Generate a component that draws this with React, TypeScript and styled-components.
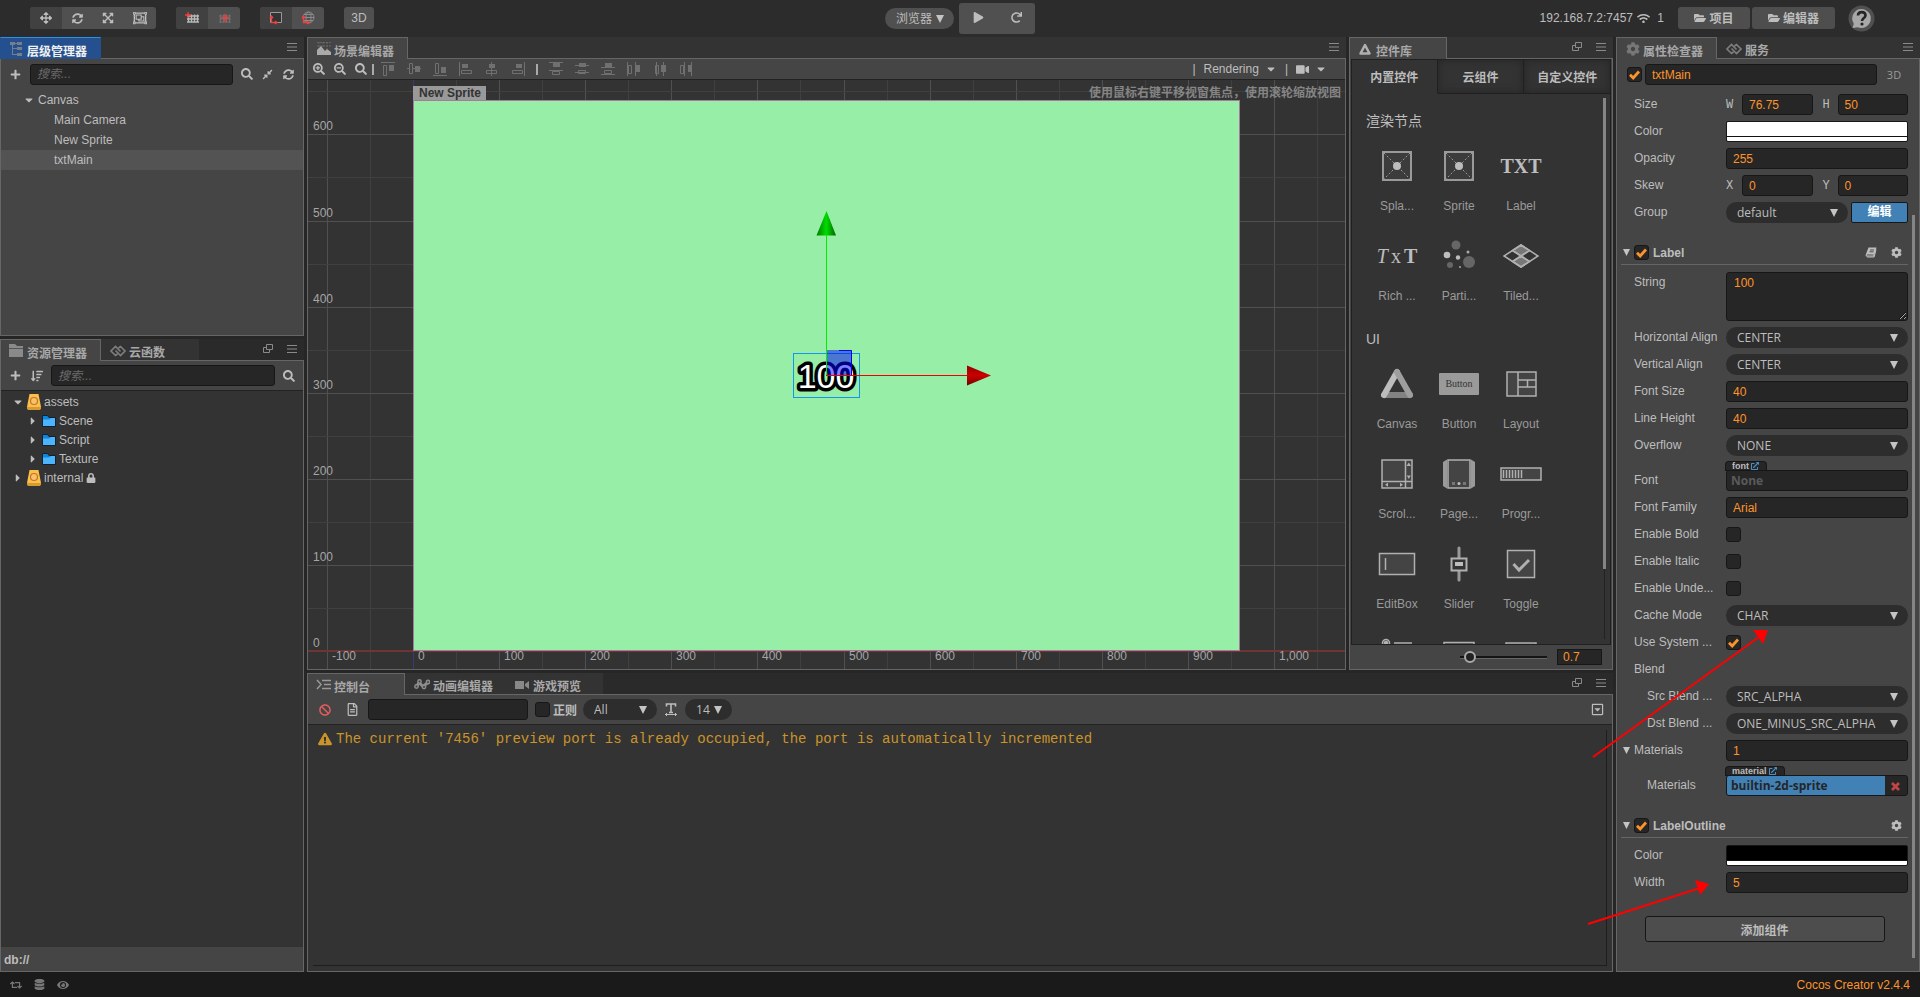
import type { ReactNode } from 'react';
import styled, { createGlobalStyle, css } from 'styled-components';
import {
  FaArrowsAlt,
  FaBan,
  FaCaretDown,
  FaCaretRight,
  FaCog,
  FaCompressAlt,
  FaDatabase,
  FaExclamationTriangle,
  FaExpandArrowsAlt,
  FaExternalLinkAlt,
  FaEye,
  FaFolderOpen,
  FaLock,
  FaPlay,
  FaPlus,
  FaRedo,
  FaRegCaretSquareDown,
  FaRegFileAlt,
  FaRegObjectGroup,
  FaRetweet,
  FaSearch,
  FaSearchMinus,
  FaSearchPlus,
  FaSortAmountDown,
  FaSyncAlt,
  FaVideo,
  FaWifi,
} from 'react-icons/fa';

const sans = '"Liberation Sans", "Noto Sans CJK SC", sans-serif';
const ui = '"Open Sans", "Noto Sans CJK SC", sans-serif';

const GlobalStyle = createGlobalStyle`
  * {
    box-sizing: border-box;
  }
  body {
    margin: 0;
    background: #262626;
    color: #bdbdbd;
    font: 12px ${sans};
    overflow: hidden;
  }
  button, input, select, textarea {
    margin: 0;
    font: inherit;
    color: inherit;
  }
`;

/* ---------- shell ---------- */

const App = styled.div`
  height: 100vh;
  display: flex;
  flex-direction: column;
`;

const TopBar = styled.header`
  height: 37px;
  display: grid;
  grid-template-columns: 1fr auto 1fr;
  background: #2c2c2c;
`;

const TopGroup = styled.div<{ $end?: boolean }>`
  display: flex;
  align-items: center;
  height: 36px;
  ${p => (p.$end ? 'justify-content: flex-end; padding-right: 45px;' : 'padding-left: 30px; gap: 20px;')}
`;

const ButtonGroup = styled.div`
  display: flex;
  height: 22px;
  border-radius: 3px;
  overflow: hidden;
  background: #505050;
`;

const ToolButton = styled.button<{ $active?: boolean; $wide?: number }>`
  display: flex;
  align-items: center;
  justify-content: center;
  width: ${p => p.$wide ?? 32}px;
  padding: 0;
  border: 0;
  background: ${p => (p.$active ? '#414141' : 'transparent')};
`;

const PreviewBar = styled.div`
  display: flex;
  gap: 5px;
  height: 37px;
`;

const PlayGroup = styled.div`
  display: flex;
  height: 31px;
  margin-top: 3px;
  padding-bottom: 3px;
  border-radius: 3px;
  background: #505050;
`;

const TopLink = styled.button<{ $wide: number }>`
  display: flex;
  align-items: center;
  justify-content: center;
  gap: 3px;
  width: ${p => p.$wide}px;
  height: 22px;
  margin-left: 2px;
  padding: 0 0 1px;
  border: 0;
  border-radius: 3px;
  background: #4e4e4e;
  font-weight: 700;
`;

const Address = styled.span`
  display: flex;
  align-items: center;
  gap: 4px;
  margin-right: 12px;
`;

const HelpButton = styled.button`
  display: flex;
  margin-left: 13px;
  padding: 0;
  border: 0;
  background: none;
`;

const Workspace = styled.main`
  flex: 1;
  min-height: 0;
  display: grid;
  grid-template-columns: 304px minmax(0, 1fr) 304px;
  gap: 3px;
`;

const Column = styled.div<{ $rows: string }>`
  display: grid;
  grid-template-rows: ${p => p.$rows};
  gap: 3px;
  min-width: 0;
  min-height: 0;
`;

const SceneRow = styled.div`
  display: grid;
  grid-template-columns: minmax(0, 1fr) 264px;
  gap: 3px;
  min-height: 0;
`;

const StatusBar = styled.footer`
  display: flex;
  align-items: center;
  gap: 12px;
  height: 25px;
  padding: 0 10px;
  background: #1a1a1a;
  color: #777;
`;

const Version = styled.span`
  margin-left: auto;
  color: #fd942b;
`;

/* ---------- panels ---------- */

const Panel = styled.section`
  position: relative;
  display: flex;
  flex-direction: column;
  min-width: 0;
  min-height: 0;
`;

const TabStrip = styled.div<{ $dark?: boolean }>`
  display: flex;
  height: 21px;
  background: ${p => (p.$dark ? '#2a2a2a' : '#333')};
`;

const Tab = styled.button<{ $active?: boolean; $focused?: boolean }>`
  position: relative;
  display: flex;
  align-items: center;
  gap: ${p => (p.$active ? 2 : 3)}px;
  height: ${p => (p.$active ? 22 : 21)}px;
  min-width: 98px;
  padding: 4px 12px 0 9px;
  border: 0;
  background: #333;
  color: #a8a8a8;
  font-weight: 700;
  ${p =>
    p.$active &&
    css`
      padding: 3px 13px 0 8px;
      border: 1px solid #666;
      border-bottom: 0;
      background: #454545;
    `}
  ${p =>
    p.$focused &&
    css`
      border-color: #2a90e8 #25508f;
      background: #25508f;
      color: #f0f0f0;
    `}
  svg {
    width: 16px;
    height: 14px;
    margin-bottom: 2px;
    flex: none;
  }
`;

const TabTools = styled.div`
  display: flex;
  align-items: center;
  gap: 14px;
  margin-left: auto;
  padding-right: 7px;
  padding-bottom: 2px;
`;

const IconButton = styled.button<{ $w?: number; $color?: string }>`
  display: flex;
  align-items: center;
  justify-content: center;
  flex: none;
  width: ${p => p.$w ?? 21}px;
  height: 20px;
  padding: 0;
  border: 0;
  background: none;
  color: ${p => p.$color ?? '#bdbdbd'};
`;

const TinyButton = styled(IconButton)`
  width: 10px;
  height: 12px;
  color: #8a8a8a;
`;

const PanelBody = styled.div<{ $dark?: boolean }>`
  flex: 1;
  min-height: 0;
  display: flex;
  flex-direction: column;
  border: 1px solid #666;
  background: ${p => (p.$dark ? '#333' : '#454545')};
`;

const SearchBar = styled.div<{ $line?: boolean }>`
  display: flex;
  align-items: center;
  height: 30px;
  padding: 0 4px;
  background: #454545;
  ${p => p.$line && 'border-bottom: 1px solid #222;'}
`;

const fieldBox = css`
  min-width: 0;
  height: 21px;
  border: 1px solid #171717;
  border-radius: 3px;
  background: #262626;
`;

const TextField = styled.input`
  ${fieldBox}
  width: 100%;
  padding: 0 6px;
  color: #fd942b;
  outline: 0;
`;

const SearchField = styled(TextField)`
  flex: 1;
  margin: 0 3px 0 4px;
  color: #bdbdbd;
  &::placeholder {
    color: #6a6a6a;
    font-style: italic;
  }
`;

const CheckWrap = styled.span`
  display: inline-grid;
  place-items: center;
  width: 15px;
  height: 15px;
  flex: none;
  > * {
    grid-area: 1 / 1;
  }
  svg {
    pointer-events: none;
    z-index: 1;
  }
`;

const CheckInput = styled.input`
  appearance: none;
  width: 15px;
  height: 15px;
  border: 1px solid #171717;
  border-radius: 3px;
  background: #262626;
`;

const SelectWrap = styled.div<{ $w?: number; $raised?: boolean }>`
  display: grid;
  align-items: center;
  height: 21px;
  width: ${p => (p.$w ? `${p.$w}px` : '100%')};
  margin-top: ${p => (p.$raised ? 8 : 0)}px;
  border-radius: 11px;
  background: ${p => (p.$raised ? '#505050' : '#2d2d2d')};
  > svg {
    grid-area: 1 / 1;
    justify-self: end;
    margin-right: 10px;
    pointer-events: none;
  }
`;

const Select = styled.select`
  grid-area: 1 / 1;
  appearance: none;
  width: 100%;
  height: 21px;
  padding: 0 0 0 11px;
  border: 0;
  background: none;
  font-family: ${ui};
  outline: 0;
`;

/* ---------- trees ---------- */

const Tree = styled.ul<{ $row: number }>`
  flex: 1;
  margin: 0;
  padding: 1px 0 0;
  list-style: none;
  li {
    height: ${p => p.$row}px;
  }
`;

const TreeRow = styled.li<{ $indent: number; $selected?: boolean }>`
  display: flex;
  align-items: center;
  gap: 3px;
  padding-left: ${p => p.$indent}px;
  background: ${p => (p.$selected ? '#535353' : 'transparent')};
  svg {
    flex: none;
  }
`;

const DbPath = styled.div`
  height: 24px;
  padding: 6px 3px;
  background: #454545;
  font-weight: 700;
`;

/* ---------- scene ---------- */

const SceneTools = styled.div`
  display: flex;
  align-items: center;
  height: 21px;
  border-bottom: 1px solid #222;
`;

const Divider = styled.span<{ $m: number }>`
  width: 2px;
  height: 11px;
  margin: 0 ${p => p.$m}px;
  background: #aaa;
`;

const RenderMode = styled.div`
  display: flex;
  align-items: center;
  gap: 6px;
  margin-left: auto;
  padding-right: 16px;
`;

const DropButton = styled.button`
  display: flex;
  align-items: center;
  gap: 6px;
  padding: 0 2px;
  border: 0;
  background: none;
`;

const SceneCanvas = styled.div`
  position: relative;
  flex: 1;
  min-height: 0;
  overflow: hidden;
  background: #333;
  > svg {
    display: block;
    width: 100%;
    height: 100%;
  }
  text {
    font: 12px ${sans};
    fill: #a6a6a6;
  }
`;

const SceneHint = styled.div`
  position: absolute;
  top: 4px;
  right: 4px;
  color: #858585;
  font-weight: 700;
  line-height: 18px;
`;

const NodeTag = styled.div`
  position: absolute;
  left: 105px;
  top: 6px;
  height: 14px;
  padding: 0 5px 0 6px;
  background: #999;
  color: #333;
  font-weight: 700;
  line-height: 14px;
`;

/* ---------- console ---------- */

const ConsoleTools = styled.div`
  display: flex;
  align-items: center;
  height: 30px;
  padding: 0 4px;
  border-bottom: 1px solid #222;
  background: #454545;
`;

const ConsoleFilter = styled(TextField)`
  width: 160px;
  margin-right: 7px;
  color: #bdbdbd;
`;

const RegexLabel = styled.label`
  margin: 0 6px 0 3px;
  font-weight: 700;
`;

const CollapseButton = styled(IconButton)`
  margin-left: auto;
`;

const LogArea = styled.div`
  flex: 1;
  margin: 5px;
  border: solid #1e1e1e;
  border-width: 0 1px 1px 0;
`;

const LogLine = styled.div`
  display: flex;
  align-items: center;
  gap: 4px;
  height: 18px;
  padding-left: 5px;
  color: #ca942b;
  font: 14px "Liberation Mono", monospace;
`;

/* ---------- node library ---------- */

const LibraryTabs = styled.div`
  display: grid;
  grid-template-columns: 1fr 1fr 1fr;
  margin: 0 1px;
`;

const LibraryTab = styled.button<{ $active?: boolean }>`
  height: 35px;
  padding: 0;
  border: 1px solid #202020;
  border-left-width: ${p => (p.$active ? 1 : 0)}px;
  background: #333;
  font-weight: 700;
  ${p =>
    p.$active
      ? 'border-bottom-color: #333;'
      : 'box-shadow: inset 0 0 8px #262626;'}
`;

const LibraryBody = styled.div`
  flex: 1;
  min-height: 0;
  display: flex;
  overflow: hidden;
  margin: 0 1px;
  border: solid #202020;
  border-width: 0 1px 1px;
  background: #333;
`;

const LibraryContent = styled.div`
  flex: 1;
  padding: 16px 0 0 14px;
`;

const GroupTitle = styled.h3`
  margin: 0 0 10px;
  font-size: 14px;
  font-weight: 400;
  line-height: 22px;
`;

const NodeGrid = styled.div`
  display: flex;
  flex-wrap: wrap;
  margin-bottom: 6px;
`;

const NodeItem = styled.div`
  display: flex;
  flex-direction: column;
  align-items: center;
  gap: 9px;
  width: 62px;
  height: 90px;
  color: #9a9a9a;
  line-height: 14px;
  svg {
    width: 48px;
    height: 48px;
  }
`;

const SerifGlyph = styled.div`
  height: 48px;
  color: #bdbdbd;
  font: 700 20px/49px "Liberation Serif", serif;
  small {
    padding: 0 3px;
    font-weight: 400;
    font-size: 20px;
  }
  i {
    font-weight: 400;
  }
`;

const ButtonGlyph = styled.div`
  width: 40px;
  height: 22px;
  margin: 13px 0;
  border-radius: 1px;
  background: #9a9a9a;
  color: #333;
  font: 10px/22px "Liberation Serif", serif;
  text-align: center;
`;

const ScrollTrack = styled.div`
  width: 3px;
  margin: 4px 4px 5px 0;
  background: linear-gradient(#222, #222) center / 1px 100% no-repeat;
`;

const ScrollThumb = styled.div`
  height: 87%;
  background: #858585;
`;

const LibraryFooter = styled.div`
  display: flex;
  align-items: center;
  justify-content: flex-end;
  gap: 10px;
  height: 24px;
  padding-right: 10px;
`;

const ZoomSlider = styled.input`
  appearance: none;
  width: 87px;
  height: 12px;
  margin: 0;
  background: linear-gradient(#141414 66%, #666 66%) center / 100% 3px no-repeat;
  &::-webkit-slider-thumb {
    appearance: none;
    width: 12px;
    height: 12px;
    border: 2px solid #aaa;
    border-radius: 50%;
    background: #222;
  }
`;

const ZoomValue = styled(TextField)`
  width: 45px;
  height: 16px;
  padding: 0 5px;
  border-radius: 0;
`;

/* ---------- inspector ---------- */

const NameRow = styled.div`
  display: flex;
  align-items: center;
  gap: 3px;
  padding: 5px 11px 3px 10px;
`;

const ModeButton = styled.button`
  width: 28px;
  flex: none;
  padding: 0;
  border: 0;
  background: none;
  color: #9a9a9a;
  font: 11px ${ui};
`;

const InspectorScroll = styled.div`
  flex: 1;
  min-height: 0;
  display: flex;
  overflow: hidden;
`;

const Properties = styled.div`
  flex: 1;
  min-width: 0;
  padding: 6px 4px 0 4px;
`;

const InspectorTrack = styled.div`
  width: 7px;
  padding: 127px 4px 13px 0;
  background: #858585 content-box;
`;

const PropRow = styled.div<{ $sub?: boolean }>`
  display: grid;
  grid-template-columns: 92px minmax(0, 1fr);
  align-items: end;
  min-height: 21px;
  margin-bottom: 6px;
  padding-left: 13px;
  > :first-child {
    padding-left: ${p => (p.$sub ? 13 : 0)}px;
  }
`;

const PropLabel = styled.label<{ $top?: boolean }>`
  align-self: ${p => (p.$top ? 'start' : 'end')};
  height: 21px;
  line-height: 20px;
  white-space: nowrap;
`;

const PropFold = styled(PropLabel)`
  display: flex;
  gap: 4px;
  margin-left: -11px;
  svg {
    margin-top: 7px;
  }
`;

const CheckCell = styled.div`
  height: 21px;
  padding-top: 3px;
`;

const Pair = styled.div`
  display: grid;
  grid-template-columns: 16px 1fr 25px 1fr;
  align-items: center;
  label {
    font: 12px "Liberation Mono", monospace;
  }
  label:nth-of-type(2) {
    padding-left: 10px;
  }
`;

const ColorButton = styled.button<{ $color: string }>`
  width: 100%;
  height: 21px;
  padding: 0;
  border: 1px solid #171717;
  border-radius: 2px;
  background: linear-gradient(${p => p.$color} 14px, #111 14px, #111 15px, #fff 15px);
`;

const GroupCell = styled.div`
  display: grid;
  grid-template-columns: minmax(0, 1fr) 57px;
  gap: 3px;
`;

const EditButton = styled.button`
  height: 21px;
  padding: 0;
  border: 1px solid #171717;
  border-radius: 2px;
  background: #4281b6;
  color: #fff;
  font-weight: 700;
  line-height: 17px;
`;

const SectionHead = styled.div`
  display: flex;
  align-items: center;
  gap: 4px;
  height: 24px;
  margin: 18px 0 7px;
  padding: 0 1px 0 2px;
  border-bottom: 1px solid #666;
  font-weight: 700;
`;

const SectionTools = styled.div`
  display: flex;
  gap: 5px;
  margin-left: auto;
`;

const TextArea = styled.textarea`
  ${fieldBox}
  display: block;
  width: 100%;
  height: 49px;
  padding: 3px 7px;
  color: #fd942b;
  resize: vertical;
  outline: 0;
`;

const AssetRef = styled.div`
  display: flex;
  flex-direction: column;
`;

const AssetType = styled.span`
  display: flex;
  align-items: center;
  align-self: flex-start;
  gap: 2px;
  height: 8px;
  padding: 0 7px 0 6px;
  border-radius: 3px 3px 0 0;
  background: #262626;
  box-shadow: 0 0 0 1px #171717;
  font-size: 9px;
  font-weight: 700;
  line-height: 8px;
  svg {
    color: #4a90c8;
  }
`;

const AssetBox = styled.div<{ $filled?: boolean }>`
  ${fieldBox}
  display: grid;
  grid-template-columns: minmax(0, 1fr) ${p => (p.$filled ? 22 : 0)}px;
  overflow: hidden;
`;

const AssetName = styled.button<{ $filled?: boolean }>`
  padding: 0 4px;
  border: 0;
  background: ${p => (p.$filled ? '#4281b6' : 'none')};
  color: ${p => (p.$filled ? '#262626' : '#5a5a5a')};
  font: 700 12px ${ui};
  line-height: 18px;
  text-align: left;
`;

const AddButton = styled.button`
  display: block;
  width: 240px;
  height: 26px;
  margin: 23px auto 0;
  border: 1px solid #171717;
  border-radius: 3px;
  background: #4d4d4d;
  font-weight: 700;
`;

const Pointers = styled.svg`
  position: absolute;
  left: -36px;
  top: 0;
  width: 200px;
  height: 920px;
  pointer-events: none;
`;

/* ---------- small drawings ---------- */

const MenuIcon = () => (
  <svg width="10" height="8" viewBox="0 0 10 8" stroke="currentColor">
    <path d="M0 .5h10M0 4h10M0 7.5h10" />
  </svg>
);

const PopIcon = () => (
  <svg width="10" height="10" viewBox="0 0 10 10" fill="none" stroke="currentColor">
    <path d="M3.5.5h6v5h-6zM3 3.5H.5v5h6V6" />
  </svg>
);

const Triangle = ({ small }: { small?: boolean }) => (
  <svg width={small ? 7 : 8} height={small ? 7 : 8} viewBox="0 0 8 8" fill="#c4c4c4">
    <path d="M0 0h8L4 8z" />
  </svg>
);

const CheckMark = () => (
  <svg width="11" height="10" viewBox="0 0 11 10" fill="none" stroke="#fd942b" strokeWidth="2.800">
    <path d="M1 4.800 4.200 8 10 1.500" />
  </svg>
);

const CrossMark = () => (
  <svg width="9" height="9" viewBox="0 0 9 9" stroke="currentColor" strokeWidth="2.800">
    <path d="M1 1l7 7M8 1 1 8" />
  </svg>
);

const BookIcon = () => (
  <svg width="12" height="11" viewBox="0 0 12 11">
    <path d="M3.500.5h8L9 9.500H1.500C.5 9.500.5 8.500.8 7.500z" fill="#bdbdbd" />
    <path d="M5 3h4M4.500 4.800h4M1.800 8h6.500" stroke="#454545" strokeWidth=".9" />
    <path d="M11 2.500 9.200 10H2" fill="none" stroke="#bdbdbd" />
  </svg>
);

const TreeIcon = () => (
  <svg viewBox="0 0 16 14" fill="#8a8a8a">
    <path d="M1 0h5v3H1zM3 3h1v10H3zM8 0h5v3H8zM8 5h5v3H8zM8 11h5v3H8zM6 1h2v1H6zM4 6h4v1H4zM4 12h4v1H4z" opacity=".8" />
  </svg>
);

const FolderIcon = () => (
  <svg viewBox="0 0 16 14" fill="#8a8a8a">
    <path d="M0 0h6l2 2h6v2H0zM0 5h14v8H0z" />
    <path d="M0 4.500h14" stroke="#555" />
  </svg>
);

const CloudIcon = () => (
  <svg viewBox="0 0 16 14" fill="none" stroke="#7c7c7c" strokeWidth="1.700">
    <path d="M7.500 10 5.500 11.500 1 7l4.500-4.500L10.500 7.500M8.500 4l2-1.500L15 7l-4.500 4.500L5.500 6.500" />
  </svg>
);

const SceneIcon = () => (
  <svg viewBox="0 0 16 14">
    <path d="M1 .5h14M1 4h14M3 0v7M7 0v5M11 0v7" stroke="#666" strokeDasharray="2 1" />
    <path d="M1 13V8l4-4 4 5 2-2 4 3v3z" fill="#aaa" />
  </svg>
);

const ConsoleIcon = () => (
  <svg viewBox="0 0 16 14" fill="none" stroke="#999" strokeWidth="1.500">
    <path d="M1 2l4 4.500L1 11M6 2.500h9M8 6.500h7M6 10.500h9" />
  </svg>
);

const AnimIcon = () => (
  <svg viewBox="0 0 16 14" fill="#444" stroke="#8c8c8c" strokeWidth="1.400">
    <path d="M2.500 8.500 5 4.500l4 4 5-4" fill="none" strokeWidth="3" />
    <circle cx="2.500" cy="8.500" r="1.700" />
    <circle cx="5.500" cy="3.500" r="1.700" />
    <circle cx="10" cy="9" r="1.700" />
    <circle cx="14" cy="4" r="1.700" />
  </svg>
);

const CameraIcon = () => (
  <svg viewBox="0 0 16 14" fill="#888">
    <path d="M1 3h9v8H1zM11 6l4-3v8l-4-3z" />
  </svg>
);

const PrismIcon = () => (
  <svg viewBox="0 0 16 14" fill="none" stroke="#b0b0b0" strokeWidth="2.500" strokeLinejoin="round">
    <path d="M7 3l4.500 8.500h-9z" />
  </svg>
);

const SnapIcon = ({ cross }: { cross?: boolean }) => (
  <svg width="14" height="12" viewBox="0 0 14 12" fill="none">
    <path
      d="M2 4h12M2 7h12M2 10h12M3.500 2.500v8M6.500 2.500v8M9.500 2.500v8M12.500 2.500v8"
      stroke={cross ? '#707070' : '#b8b8b8'}
      strokeWidth={cross ? 1 : 1.4}
    />
    <path d={cross ? 'M4 6h8M8 2v8' : 'M0 3h6M3 0v6'} stroke="#f04040" strokeWidth="1.300" />
  </svg>
);

const PivotIcon = ({ globe }: { globe?: boolean }) => (
  <svg width="14" height="14" viewBox="0 0 14 14" fill="none">
    {globe ? (
      <g stroke="#8c8c8c">
        <circle cx="7.500" cy="6.500" r="5.500" />
        <ellipse cx="7.500" cy="6.500" rx="2.500" ry="5.500" />
        <path d="M2 6.500h11M3 3.500h9M3 9.500h9" />
      </g>
    ) : (
      <path d="M1.500 1.500h11v10h-11z" stroke="#999" fill="#333" />
    )}
    <path d="M2.500 6v5.500H7M1 7 2.500 5 4 7M6 10l2 1.500L6 13" stroke="#f04040" strokeWidth="1.300" />
  </svg>
);

const HelpIcon = () => (
  <svg width="27" height="27" viewBox="0 0 27 27">
    <circle cx="13.500" cy="13.500" r="13" fill="#505050" />
    <path d="M13.500 4a9.500 9.500 0 1 1-4 18.200L4.500 23l1.300-4.300A9.500 9.500 0 0 1 13.500 4z" fill="#a8a8a8" />
    <path d="M10 10.500c0-4.500 7.500-4.500 7.500 0 0 2.500-3.500 2.500-3.500 5.500" fill="none" stroke="#262626" strokeWidth="2.600" />
    <circle cx="14" cy="19" r="1.600" fill="#262626" />
  </svg>
);

const AssetDbIcon = () => (
  <svg width="14" height="16" viewBox="0 0 14 16">
    <path d="M2.500 0h9L14 13H0z" fill="#fdbf4a" />
    <path d="M0 13h14v1.500L13 16H1l-1-1.500z" fill="#d69a35" />
    <circle cx="7" cy="7" r="3.500" fill="#fdbf6a" stroke="#b8792a" strokeWidth="1.200" />
  </svg>
);

const BlueFolder = () => (
  <svg width="14" height="13" viewBox="0 0 14 13" stroke="#14202c">
    <path d="M.5 1.500h5l1.500 2h6.500v9H.5z" fill="#0f85dc" />
    <path d="M1 5.500h6l2-1.500h4v8H1z" fill="#4bb4fc" stroke="none" />
  </svg>
);

const TextSizeIcon = () => (
  <svg width="12" height="13" viewBox="0 0 12 13" fill="none" stroke="#bdbdbd">
    <path d="M1.500 3.500V1h9v2.500M6 1v8M4 9.500h4" strokeWidth="1.600" />
    <path d="M0 11.500h12M1.500 10v3M10.500 10v3" />
  </svg>
);

const alignShapes = [
  'M0 .5h14M2.500 3.500h3v10h-3z|M8 3h5v6H8z',
  'M0 6.500h2M6 6.500h8M2.500 1.500h3v10h-3z|M8 4h5v6H8z',
  'M0 13.500h14M2.500 1.500h3v10h-3z|M8 5h5v6H8z',
  'M.5 0v14M2.500 8.500h10v3h-10z|M3 2h6v4H3z',
  'M6.500 0v14M1.500 8.500h10v3h-10z|M4 2h6v4H4z',
  'M13.500 0v14M1.500 8.500h10v3h-10z|M5 2h6v4H5z',
  'M0 .5h14M0 8.500h14M3.500 9.500h7v3h-7z|M4 1h7v4H4z',
  'M0 3.500h14M0 10.500h14M3.500 8.500h7v3h-7z|M4 1h7v4H4z',
  'M0 5.500h14M0 12.500h14M3.500 8.500h7v3h-7z|M4 1h7v4H4z',
  'M.5 0v14M8.500 0v14M1.500 3.500h3v8h-3z|M9 3h4v7H9z',
  'M3.500 0v14M10.500 0v14M2.500 3.500h3v8h-3z|M8 3h5v7H8z',
  'M5.500 0v14M12.500 0v14M1.500 3.500h3v8h-3z|M9 3h4v7H9z',
];

const AlignIcon = ({ shape }: { shape: string }) => {
  const [outline, solid] = shape.split('|');
  return (
    <svg width="14" height="14" viewBox="0 0 14 14">
      <path d={outline} fill="none" stroke="#707070" />
      <path d={solid} fill="#707070" />
    </svg>
  );
};

const line = { fill: '#444', stroke: '#b0b0b0', strokeWidth: 1.5 };

const SpriteGlyph = () => (
  <svg viewBox="0 0 48 48">
    <path d="M10 10h28v28H10z" fill="#3c3c3c" stroke="#9a9a9a" strokeWidth="2" />
    <path d="M11 11l26 26M37 11 11 37" stroke="#999" strokeDasharray="2 2" />
    <circle cx="24" cy="24" r="4" fill="#bdbdbd" />
  </svg>
);

const ParticleGlyph = () => (
  <svg viewBox="0 0 48 48" fill="#666">
    <circle cx="21" cy="13" r="4.500" />
    <circle cx="34" cy="30" r="6" />
    <circle cx="15" cy="33" r="3" />
    <circle cx="12" cy="23" r="3.300" fill="#bdbdbd" />
    <circle cx="23" cy="25.500" r="2.200" fill="#bdbdbd" />
    <circle cx="33" cy="20" r="1.500" fill="#aaa" />
    <circle cx="25" cy="35" r="1" fill="#aaa" />
  </svg>
);

const TiledGlyph = () => (
  <svg viewBox="0 0 48 48" fill="none" stroke="#b0b0b0" strokeWidth="1.500">
    <path d="M24 13l8.500 5.500-8.500 5.500-8.500-5.500zM24 24l8.500 5.500L24 35l-8.500-5.500z" fill="#777" />
    <path d="M24 13l17 11-17 11L7 24zM15.500 18.500l17 11M32.500 18.500l-17 11" />
  </svg>
);

const CanvasGlyph = () => (
  <svg viewBox="0 0 48 48" fill="none" strokeWidth="6" strokeLinecap="round">
    <path d="M11 35h26" stroke="#828282" />
    <path d="M24 12 11 35" stroke="#bdbdbd" />
    <path d="M24 12l13 23" stroke="#9e9e9e" />
  </svg>
);

const LayoutGlyph = () => (
  <svg viewBox="0 0 48 48" {...line}>
    <path d="M10 12h29v24H10zM21 12v24M21 20h18M21 27h18M30.500 20v7" />
  </svg>
);

const ScrollGlyph = () => (
  <svg viewBox="0 0 48 48" {...line}>
    <path d="M9 10h30v28H9zM32.500 10v28M9 31.500h30" />
    <path d="M35.800 12.500 38 16h-4.500zM35.800 29l2-3.500h-4zM12 34.800l3-2v4zM30 34.800l-3-2v4z" fill="#b0b0b0" stroke="none" />
  </svg>
);

const PageGlyph = () => (
  <svg viewBox="0 0 48 48" {...line}>
    <path d="M13 10h22v28H13z" />
    <path d="M12 9.500 8 12v24l4 2.500zM36 9.500l4 2.500v24l-4 2.500z" fill="#9a9a9a" stroke="none" />
    <path d="M17 32h3v3h-3zM28 32h3v3h-3z" fill="#777" stroke="none" />
    <circle cx="24" cy="33.500" r="1.500" fill="#bdbdbd" stroke="none" />
  </svg>
);

const ProgressGlyph = () => (
  <svg viewBox="0 0 48 48" {...line}>
    <path d="M4 18h40v12H4z" />
    <path d="M6.500 20v8M9.500 20v8M12.500 20v8M15.500 20v8M18.500 20v8M21.500 20v8M24.500 20v8" />
  </svg>
);

const EditBoxGlyph = () => (
  <svg viewBox="0 0 48 48" {...line}>
    <path d="M6.500 13.500h35v21h-35zM12.500 18v12" />
  </svg>
);

const SliderGlyph = () => (
  <svg viewBox="0 0 48 48" stroke="#b0b0b0" fill="#333">
    <path d="M24 8v32" strokeWidth="3" strokeLinecap="round" stroke="#999" />
    <path d="M16.500 18.500h15v12h-15z" strokeWidth="2" />
    <path d="M20 22h8v4h-8z" fill="#bdbdbd" stroke="none" />
  </svg>
);

const ToggleGlyph = () => (
  <svg viewBox="0 0 48 48" {...line}>
    <path d="M10.500 10.500h27v27h-27z" />
    <path d="M16.500 24l5.500 6 10-10" fill="none" strokeWidth="3" />
  </svg>
);

const ToggleGroupGlyph = () => (
  <svg viewBox="0 0 48 48" {...line}>
    <circle cx="13" cy="13" r="3.500" />
    <circle cx="13" cy="13" r="1.500" fill="#bdbdbd" />
    <path d="M21 13h18" />
  </svg>
);

const VideoGlyph = () => (
  <svg viewBox="0 0 48 48" {...line}>
    <path d="M9 12.500h30v22H9z" />
  </svg>
);

const WebGlyph = () => (
  <svg viewBox="0 0 48 48" {...line}>
    <path d="M9 13h30v20H9z" />
  </svg>
);

/* ---------- shared pieces ---------- */

const Check = ({ id, checked, label }: { id?: string; checked?: boolean; label?: string }) => (
  <CheckWrap>
    <CheckInput type="checkbox" id={id} aria-label={label} defaultChecked={checked} />
    {checked && <CheckMark />}
  </CheckWrap>
);

type DropDownProps = { id?: string; value: string; width?: number; label?: string; raised?: boolean };

const DropDown = ({ id, value, width, label, raised }: DropDownProps) => (
  <SelectWrap $w={width} $raised={raised}>
    <Select id={id} aria-label={label} defaultValue={value}>
      <option>{value}</option>
    </Select>
    <Triangle />
  </SelectWrap>
);

const Prop = ({ label, id, sub, children }: { label: string; id: string; sub?: boolean; children?: ReactNode }) => (
  <PropRow $sub={sub}>
    <PropLabel htmlFor={id}>{label}</PropLabel>
    {children}
  </PropRow>
);

const Tools = ({ pop }: { pop?: boolean }) => (
  <TabTools>
    {pop && (
      <TinyButton aria-label="pop out">
        <PopIcon />
      </TinyButton>
    )}
    <TinyButton aria-label="panel menu">
      <MenuIcon />
    </TinyButton>
  </TabTools>
);

/* ---------- panels ---------- */

const Hierarchy = () => (
  <Panel>
    <TabStrip>
      <Tab $active $focused>
        <TreeIcon />
        层级管理器
      </Tab>
      <Tools />
    </TabStrip>
    <PanelBody>
      <SearchBar>
        <IconButton aria-label="add node"><FaPlus size={11} /></IconButton>
        <SearchField placeholder="搜索..." aria-label="search nodes" />
        <IconButton aria-label="search"><FaSearch size={12} /></IconButton>
        <IconButton aria-label="collapse"><FaCompressAlt size={11} /></IconButton>
        <IconButton aria-label="refresh"><FaSyncAlt size={11} /></IconButton>
      </SearchBar>
      <Tree $row={20}>
        <TreeRow $indent={22}>
          <FaCaretDown size={12} />
          Canvas
        </TreeRow>
        <TreeRow $indent={53}>Main Camera</TreeRow>
        <TreeRow $indent={53}>New Sprite</TreeRow>
        <TreeRow $indent={53} $selected>txtMain</TreeRow>
      </Tree>
    </PanelBody>
  </Panel>
);

const Assets = () => (
  <Panel>
    <TabStrip $dark>
      <Tab $active>
        <FolderIcon />
        资源管理器
      </Tab>
      <Tab>
        <CloudIcon />
        云函数
      </Tab>
      <Tools pop />
    </TabStrip>
    <PanelBody $dark>
      <SearchBar $line>
        <IconButton aria-label="add asset"><FaPlus size={11} /></IconButton>
        <IconButton aria-label="sort"><FaSortAmountDown size={12} /></IconButton>
        <SearchField placeholder="搜索..." aria-label="search assets" />
        <IconButton aria-label="search"><FaSearch size={12} /></IconButton>
      </SearchBar>
      <Tree $row={19}>
        <TreeRow $indent={11}>
          <FaCaretDown size={12} />
          <AssetDbIcon />
          assets
        </TreeRow>
        {['Scene', 'Script', 'Texture'].map(name => (
          <TreeRow key={name} $indent={26}>
            <FaCaretRight size={12} />
            <BlueFolder />
            {name}
          </TreeRow>
        ))}
        <TreeRow $indent={11}>
          <FaCaretRight size={12} />
          <AssetDbIcon />
          internal
          <FaLock size={10} />
        </TreeRow>
      </Tree>
      <DbPath>db://</DbPath>
    </PanelBody>
  </Panel>
);

// 100 scene units per grid step, origin at the canvas's bottom left corner
const ORIGIN_X = 105;
const ORIGIN_Y = 571;
const STEP = 86.1;

const range = (from: number, to: number) => Array.from({ length: to - from + 1 }, (_, i) => from + i);
const gridX = (i: number) => Math.round(ORIGIN_X + i * STEP);
const gridY = (i: number) => Math.round(ORIGIN_Y - i * STEP);

const SceneView = () => (
  <svg>
    <defs>
      <linearGradient id="coneUp">
        <stop offset="0" stopColor="#007a00" />
        <stop offset=".5" stopColor="#00dc00" />
        <stop offset="1" stopColor="#006400" />
      </linearGradient>
      <linearGradient id="coneRight" x2="0" y2="1">
        <stop offset="0" stopColor="#900000" />
        <stop offset=".5" stopColor="#cc0000" />
        <stop offset="1" stopColor="#700000" />
      </linearGradient>
    </defs>
    {range(-2, 40).map(i => {
      const x = gridX(i / 2) + 0.5;
      return <line key={i} x1={x} x2={x} y1="0" y2="100%" stroke={i % 2 ? '#404040' : '#505050'} />;
    })}
    {range(-2, 13).map(i => {
      const y = gridY(i / 2) + 0.5;
      return <line key={i} x1="0" x2="100%" y1={y} y2={y} stroke={i % 2 ? '#404040' : '#505050'} />;
    })}
    <line x1="105.500" x2="105.500" y1="0" y2="100%" stroke="#3a3a78" />
    <line x1="0" x2="100%" y1="571" y2="571" stroke="#6e3535" strokeWidth="2" />
    {range(0, 6).map(i => (
      <text key={i} x="5" y={gridY(i) - 4}>
        {i * 100}
      </text>
    ))}
    {range(-1, 10).map(i => (
      <text key={i} x={gridX(i) + 5} y={ORIGIN_Y + 9}>
        {(i * 100).toLocaleString('en-US')}
      </text>
    ))}
    <rect x="105.500" y="20.500" width="826" height="550" fill="#97eea7" stroke="#a878a0" />
    <text
      x="518"
      y="308"
      textAnchor="middle"
      style={{ fontSize: 34, fill: '#fff', stroke: '#000', strokeWidth: 7, strokeLinejoin: 'round', paintOrder: 'stroke' }}
    >
      100
    </text>
    <rect x="485.500" y="273.500" width="66" height="44" fill="none" stroke="#1593f0" />
    <rect x="518" y="270" width="26" height="26" fill="#0000ff" fillOpacity=".5" />
    <path d="M531 270.500h12.500V296" fill="none" stroke="#0000ff" />
    <path d="M518.500 296V155" stroke="#00f000" />
    <path d="M508.500 155.500h19.500L518.500 131z" fill="url(#coneUp)" />
    <path d="M518 295.500h141" stroke="#f00000" />
    <path d="M659 285.500v20l24-10z" fill="url(#coneRight)" />
  </svg>
);

const Scene = () => (
  <Panel>
    <TabStrip>
      <Tab $active>
        <SceneIcon />
        场景编辑器
      </Tab>
      <Tools />
    </TabStrip>
    <PanelBody>
      <SceneTools>
        <IconButton aria-label="zoom in"><FaSearchPlus size={12} /></IconButton>
        <IconButton aria-label="zoom out"><FaSearchMinus size={12} /></IconButton>
        <IconButton aria-label="reset zoom"><FaSearch size={12} /></IconButton>
        <Divider $m={1} />
        {alignShapes.slice(0, 6).map(s => (
          <IconButton key={s} $w={26} aria-label="align"><AlignIcon shape={s} /></IconButton>
        ))}
        <Divider $m={5} />
        {alignShapes.slice(6).map(s => (
          <IconButton key={s} $w={26} aria-label="distribute"><AlignIcon shape={s} /></IconButton>
        ))}
        <RenderMode>
          |
          <DropButton>
            Rendering
            <FaCaretDown size={12} />
          </DropButton>
          |
          <DropButton aria-label="camera">
            <FaVideo size={13} />
            <FaCaretDown size={12} />
          </DropButton>
        </RenderMode>
      </SceneTools>
      <SceneCanvas>
        <SceneView />
        <NodeTag>New Sprite</NodeTag>
        <SceneHint>使用鼠标右键平移视窗焦点，使用滚轮缩放视图</SceneHint>
      </SceneCanvas>
    </PanelBody>
  </Panel>
);

const renderNodes: [string, ReactNode][] = [
  ['Spla...', <SpriteGlyph />],
  ['Sprite', <SpriteGlyph />],
  ['Label', <SerifGlyph>TXT</SerifGlyph>],
  ['Rich ...', <SerifGlyph><i>T</i><small>x</small>T</SerifGlyph>],
  ['Parti...', <ParticleGlyph />],
  ['Tiled...', <TiledGlyph />],
];

const uiNodes: [string, ReactNode][] = [
  ['Canvas', <CanvasGlyph />],
  ['Button', <ButtonGlyph>Button</ButtonGlyph>],
  ['Layout', <LayoutGlyph />],
  ['Scrol...', <ScrollGlyph />],
  ['Page...', <PageGlyph />],
  ['Progr...', <ProgressGlyph />],
  ['EditBox', <EditBoxGlyph />],
  ['Slider', <SliderGlyph />],
  ['Toggle', <ToggleGlyph />],
  ['', <ToggleGroupGlyph />],
  ['', <VideoGlyph />],
  ['', <WebGlyph />],
];

const NodeList = ({ items }: { items: [string, ReactNode][] }) => (
  <NodeGrid>
    {items.map(([name, glyph], i) => (
      <NodeItem key={i}>
        {glyph}
        {name}
      </NodeItem>
    ))}
  </NodeGrid>
);

const Library = () => (
  <Panel>
    <TabStrip>
      <Tab $active>
        <PrismIcon />
        控件库
      </Tab>
      <Tools pop />
    </TabStrip>
    <PanelBody>
      <LibraryTabs>
        <LibraryTab $active>内置控件</LibraryTab>
        <LibraryTab>云组件</LibraryTab>
        <LibraryTab>自定义控件</LibraryTab>
      </LibraryTabs>
      <LibraryBody>
        <LibraryContent>
          <GroupTitle>渲染节点</GroupTitle>
          <NodeList items={renderNodes} />
          <GroupTitle>UI</GroupTitle>
          <NodeList items={uiNodes} />
        </LibraryContent>
        <ScrollTrack>
          <ScrollThumb />
        </ScrollTrack>
      </LibraryBody>
      <LibraryFooter>
        <ZoomSlider type="range" min="0.65" max="1.6" step="0.05" defaultValue="0.7" aria-label="icon size" />
        <ZoomValue defaultValue="0.7" aria-label="icon size value" />
      </LibraryFooter>
    </PanelBody>
  </Panel>
);

const Console = () => (
  <Panel>
    <TabStrip $dark>
      <Tab $active>
        <ConsoleIcon />
        控制台
      </Tab>
      <Tab>
        <AnimIcon />
        动画编辑器
      </Tab>
      <Tab>
        <CameraIcon />
        游戏预览
      </Tab>
      <Tools pop />
    </TabStrip>
    <PanelBody $dark>
      <ConsoleTools>
        <IconButton $w={25} $color="#e05c5c" aria-label="clear"><FaBan size={12} /></IconButton>
        <IconButton $w={31} aria-label="open log"><FaRegFileAlt size={13} /></IconButton>
        <ConsoleFilter aria-label="filter" />
        <Check id="regex" />
        <RegexLabel htmlFor="regex">正则</RegexLabel>
        <DropDown value="All" width={74} label="log level" />
        <IconButton $w={28} aria-label="font size"><TextSizeIcon /></IconButton>
        <DropDown value="14" width={47} label="log font size" />
        <CollapseButton aria-label="collapse logs"><FaRegCaretSquareDown size={13} /></CollapseButton>
      </ConsoleTools>
      <LogArea>
        <LogLine>
          <FaExclamationTriangle size={14} />
          The current '7456' preview port is already occupied, the port is automatically incremented
        </LogLine>
      </LogArea>
    </PanelBody>
  </Panel>
);

const Inspector = () => (
  <Panel>
    <TabStrip>
      <Tab $active>
        <FaCog color="#777" />
        属性检查器
      </Tab>
      <Tab>
        <CloudIcon />
        服务
      </Tab>
      <Tools />
    </TabStrip>
    <PanelBody>
      <NameRow>
        <Check checked label="active" />
        <TextField defaultValue="txtMain" aria-label="node name" />
        <ModeButton>3D</ModeButton>
      </NameRow>
      <InspectorScroll>
        <Properties>
          <Prop label="Size" id="size-w">
            <Pair>
              <label htmlFor="size-w">W</label>
              <TextField id="size-w" defaultValue="76.75" />
              <label htmlFor="size-h">H</label>
              <TextField id="size-h" defaultValue="50" />
            </Pair>
          </Prop>
          <Prop label="Color" id="color"><ColorButton id="color" $color="#fff" /></Prop>
          <Prop label="Opacity" id="opacity"><TextField id="opacity" defaultValue="255" /></Prop>
          <Prop label="Skew" id="skew-x">
            <Pair>
              <label htmlFor="skew-x">X</label>
              <TextField id="skew-x" defaultValue="0" />
              <label htmlFor="skew-y">Y</label>
              <TextField id="skew-y" defaultValue="0" />
            </Pair>
          </Prop>
          <Prop label="Group" id="group">
            <GroupCell>
              <DropDown id="group" value="default" />
              <EditButton>编辑</EditButton>
            </GroupCell>
          </Prop>

          <SectionHead>
            <Triangle small />
            <Check checked label="Label enabled" />
            Label
            <SectionTools>
              <IconButton aria-label="docs"><BookIcon /></IconButton>
              <IconButton aria-label="settings"><FaCog size={11} /></IconButton>
            </SectionTools>
          </SectionHead>
          <PropRow>
            <PropLabel htmlFor="string" $top>String</PropLabel>
            <TextArea id="string" defaultValue="100" />
          </PropRow>
          <Prop label="Horizontal Align" id="halign"><DropDown id="halign" value="CENTER" /></Prop>
          <Prop label="Vertical Align" id="valign"><DropDown id="valign" value="CENTER" /></Prop>
          <Prop label="Font Size" id="font-size"><TextField id="font-size" defaultValue="40" /></Prop>
          <Prop label="Line Height" id="line-height"><TextField id="line-height" defaultValue="40" /></Prop>
          <Prop label="Overflow" id="overflow"><DropDown id="overflow" value="NONE" /></Prop>
          <Prop label="Font" id="font">
            <AssetRef>
              <AssetType>font<FaExternalLinkAlt size={8} /></AssetType>
              <AssetBox><AssetName id="font">None</AssetName></AssetBox>
            </AssetRef>
          </Prop>
          <Prop label="Font Family" id="family"><TextField id="family" defaultValue="Arial" /></Prop>
          <Prop label="Enable Bold" id="bold"><CheckCell><Check id="bold" /></CheckCell></Prop>
          <Prop label="Enable Italic" id="italic"><CheckCell><Check id="italic" /></CheckCell></Prop>
          <Prop label="Enable Unde..." id="underline"><CheckCell><Check id="underline" /></CheckCell></Prop>
          <Prop label="Cache Mode" id="cache"><DropDown id="cache" value="CHAR" /></Prop>
          <Prop label="Use System ..." id="system"><CheckCell><Check id="system" checked /></CheckCell></Prop>
          <PropRow><PropLabel as="span">Blend</PropLabel></PropRow>
          <Prop label="Src Blend ..." id="src" sub><DropDown id="src" value="SRC_ALPHA" /></Prop>
          <Prop label="Dst Blend ..." id="dst" sub><DropDown id="dst" value="ONE_MINUS_SRC_ALPHA" /></Prop>
          <PropRow>
            <PropFold htmlFor="materials"><Triangle small />Materials</PropFold>
            <TextField id="materials" defaultValue="1" />
          </PropRow>
          <Prop label="Materials" id="material" sub>
            <AssetRef>
              <AssetType>material<FaExternalLinkAlt size={8} /></AssetType>
              <AssetBox $filled>
                <AssetName id="material" $filled>builtin-2d-sprite</AssetName>
                <IconButton $color="#c04545" aria-label="remove material"><CrossMark /></IconButton>
              </AssetBox>
            </AssetRef>
          </Prop>

          <SectionHead>
            <Triangle small />
            <Check checked label="LabelOutline enabled" />
            LabelOutline
            <SectionTools>
              <IconButton aria-label="settings"><FaCog size={11} /></IconButton>
            </SectionTools>
          </SectionHead>
          <Prop label="Color" id="outline-color"><ColorButton id="outline-color" $color="#000" /></Prop>
          <Prop label="Width" id="outline-width"><TextField id="outline-width" defaultValue="5" /></Prop>
          <AddButton>添加组件</AddButton>
        </Properties>
        <InspectorTrack />
      </InspectorScroll>
    </PanelBody>
    <Pointers viewBox="0 0 200 920" fill="#f00" stroke="#f00">
      <path d="M13 720 179 600M8 887l112-36" strokeWidth="2" />
      <path d="M173 593h15l-5 14zM115 843l14 4-9 11z" stroke="none" />
    </Pointers>
  </Panel>
);

export default function Editor() {
  return (
    <App>
      <GlobalStyle />
      <TopBar>
        <TopGroup>
          <ButtonGroup>
            <ToolButton $active aria-label="move"><FaArrowsAlt size={12} /></ToolButton>
            <ToolButton $wide={30} aria-label="rotate"><FaSyncAlt size={11} /></ToolButton>
            <ToolButton $wide={31} aria-label="scale"><FaExpandArrowsAlt size={12} /></ToolButton>
            <ToolButton $wide={33} aria-label="rect"><FaRegObjectGroup size={14} /></ToolButton>
          </ButtonGroup>
          <ButtonGroup>
            <ToolButton $active aria-label="pivot"><SnapIcon /></ToolButton>
            <ToolButton aria-label="center"><SnapIcon cross /></ToolButton>
          </ButtonGroup>
          <ButtonGroup>
            <ToolButton $active aria-label="local"><PivotIcon /></ToolButton>
            <ToolButton aria-label="global"><PivotIcon globe /></ToolButton>
          </ButtonGroup>
          <ButtonGroup>
            <ToolButton $wide={30}>3D</ToolButton>
          </ButtonGroup>
        </TopGroup>
        <PreviewBar>
          <DropDown value="浏览器" width={69} label="preview target" raised />
          <PlayGroup>
            <ToolButton $wide={38} aria-label="play"><FaPlay size={11} /></ToolButton>
            <ToolButton $wide={38} aria-label="reload"><FaRedo size={11} /></ToolButton>
          </PlayGroup>
        </PreviewBar>
        <TopGroup $end>
          <Address>
            192.168.7.2:7457
            <FaWifi size={13} />
            <span>&nbsp;1</span>
          </Address>
          <TopLink $wide={72}><FaFolderOpen size={12} />项目</TopLink>
          <TopLink $wide={83}><FaFolderOpen size={12} />编辑器</TopLink>
          <HelpButton aria-label="help"><HelpIcon /></HelpButton>
        </TopGroup>
      </TopBar>
      <Workspace>
        <Column $rows="minmax(0, 299fr) minmax(0, 633fr)">
          <Hierarchy />
          <Assets />
        </Column>
        <Column $rows="minmax(0, 633fr) minmax(0, 299fr)">
          <SceneRow>
            <Scene />
            <Library />
          </SceneRow>
          <Console />
        </Column>
        <Inspector />
      </Workspace>
      <StatusBar>
        <FaRetweet size={12} />
        <FaDatabase size={11} />
        <FaEye size={12} />
        <Version>Cocos Creator v2.4.4</Version>
      </StatusBar>
    </App>
  );
}
